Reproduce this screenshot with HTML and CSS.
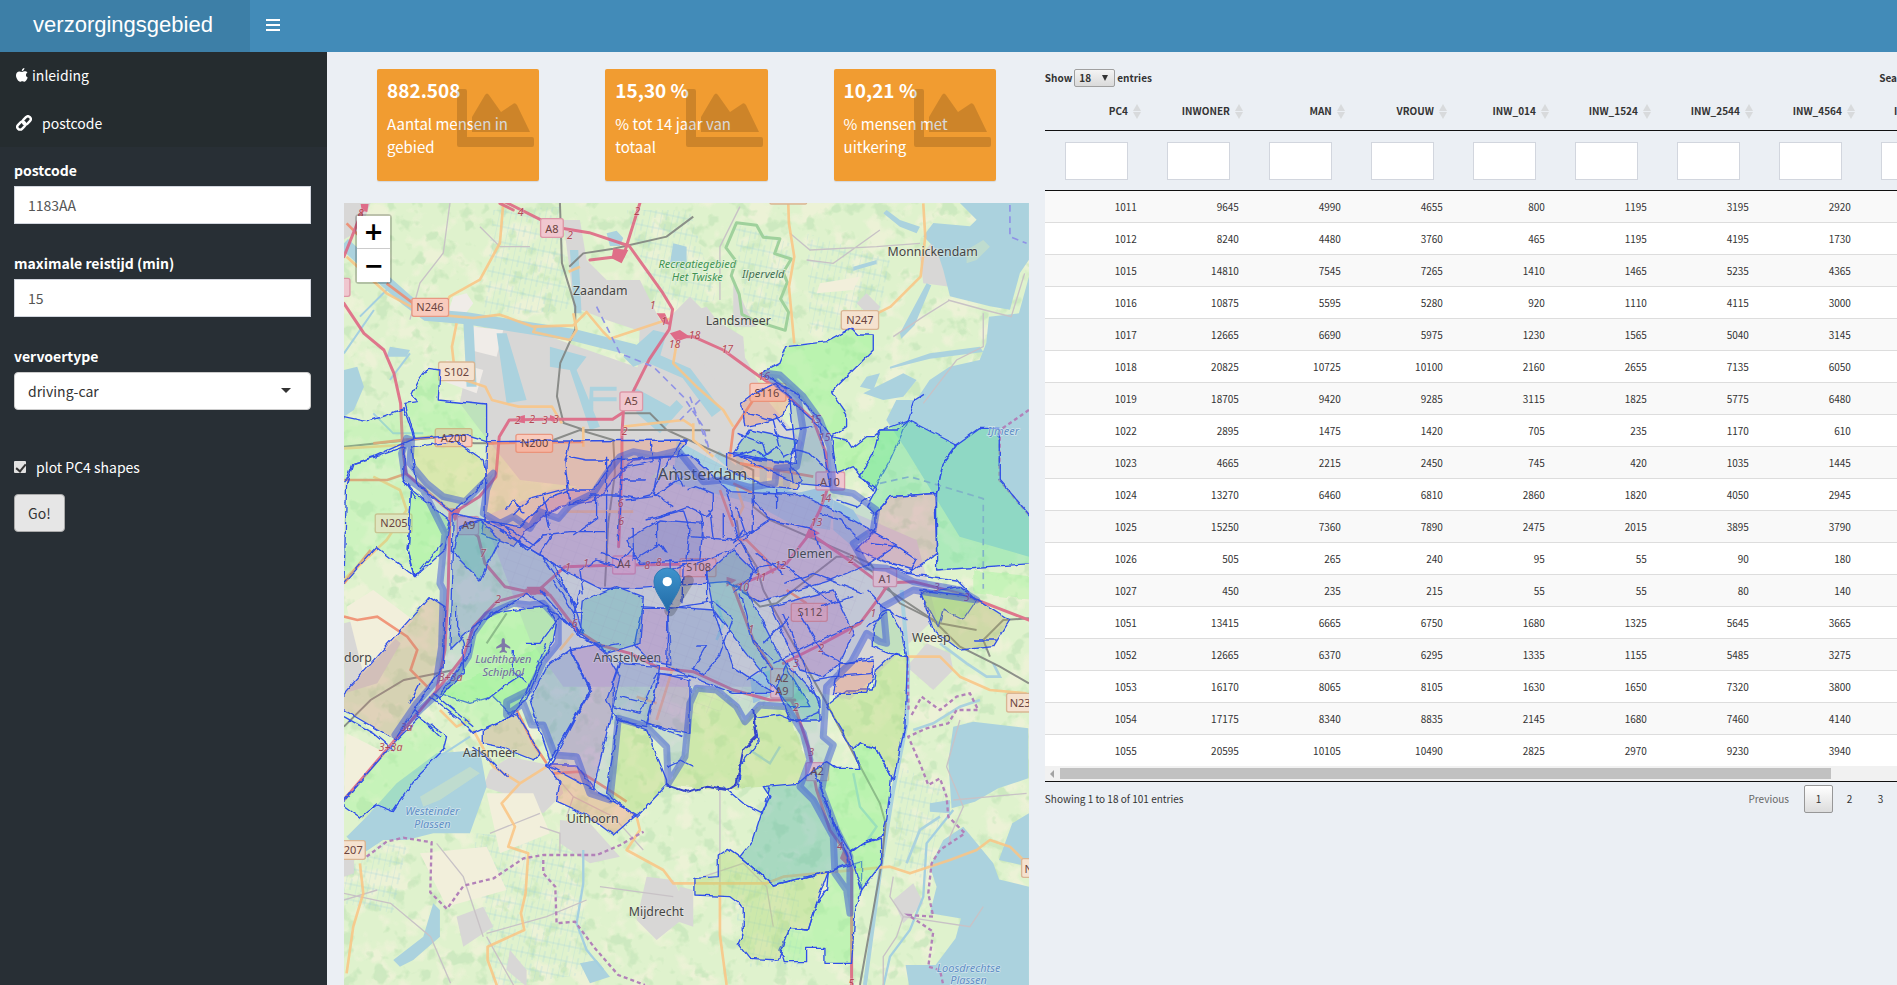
FILE: index.html
```html
<!DOCTYPE html>
<html lang="nl">
<head>
<meta charset="utf-8">
<title>verzorgingsgebied</title>
<link rel="stylesheet" href="styles.css">
</head>
<body>
<header class="topbar">
  <a class="logo" href="#">verzorgingsgebied</a>
  <button class="toggle" type="button" aria-label="Toggle navigation">
    <svg width="14" height="12" viewBox="0 0 14 12"><path d="M0 1h14M0 6h14M0 11h14" stroke="#fff" stroke-width="2"/></svg>
  </button>
</header>
<div class="shell">
  <aside class="sidebar">
    <nav class="menu">
      <a class="menu-item tight" href="#"><svg width="12" height="14" viewBox="0 0 12 14" fill="#fff"><path d="M8.400 0c.2 1.500-1 3-2.600 3.200C5.600 1.700 6.900.2 8.400 0zM11.700 9.500C11 11.500 9.800 13.700 8.500 13.700c-.8 0-1.200-.5-2.200-.5s-1.400.5-2.200.5C2.300 13.700 0 10.300 0 7.300c0-2.400 1.600-3.900 3.400-3.900 1 0 1.900.6 2.700.6.700 0 1.700-.7 2.900-.7.900 0 1.900.4 2.500 1.300-2.200 1.400-1.900 4.200.2 4.900z"/></svg><span>inleiding</span></a>
      <a class="menu-item" href="#"><svg width="16" height="16" viewBox="0 0 16 16" fill="none" stroke="#fff" stroke-width="2.400"><rect x="6.200" y="2.600" width="9" height="5.600" rx="2.800" transform="rotate(-45 10.700 5.400)"/><rect x=".8" y="7.800" width="9" height="5.600" rx="2.800" transform="rotate(-45 5.300 10.600)"/></svg><span>postcode</span></a>
    </nav>
    <form class="form">
      <div class="field"><label for="pc">postcode</label><input id="pc" type="text" value="1183AA"></div>
      <div class="field"><label for="tijd">maximale reistijd (min)</label><input id="tijd" type="text" value="15"></div>
      <div class="field"><label for="type">vervoertype</label>
        <div class="select-wrap"><select id="type"><option>driving-car</option></select></div></div>
      <label class="check"><input type="checkbox" checked><span>plot PC4 shapes</span></label>
      <button class="go" type="button">Go!</button>
    </form>
  </aside>
  <main class="content">
    <section class="left">
      <div class="boxes">
        <div class="slot"><div class="box"><strong>882.508</strong><p>Aantal mensen in gebied</p><svg class="chart" viewBox="0 0 77 58"><path d="M2 0h6q2 0 2 2v46h65q2 0 2 2v6q0 2-2 2H2q-2 0-2-2V2q0-2 2-2zM15 43V28L28 6q2-3 4 0l12 17 12-8q2-2 4 1l13 27z"/></svg></div></div>
        <div class="slot"><div class="box"><strong>15,30 %</strong><p>% tot 14 jaar van totaal</p><svg class="chart" viewBox="0 0 77 58"><path d="M2 0h6q2 0 2 2v46h65q2 0 2 2v6q0 2-2 2H2q-2 0-2-2V2q0-2 2-2zM15 43V28L28 6q2-3 4 0l12 17 12-8q2-2 4 1l13 27z"/></svg></div></div>
        <div class="slot"><div class="box"><strong>10,21 %</strong><p>% mensen met uitkering</p><svg class="chart" viewBox="0 0 77 58"><path d="M2 0h6q2 0 2 2v46h65q2 0 2 2v6q0 2-2 2H2q-2 0-2-2V2q0-2 2-2zM15 43V28L28 6q2-3 4 0l12 17 12-8q2-2 4 1l13 27z"/></svg></div></div>
      </div>
      <div class="map">
        <div class="zoom"><button type="button" aria-label="Zoom in">+</button><button type="button" aria-label="Zoom out">−</button></div>
        <svg class="map-art" viewBox="12 9 2055 2346" preserveAspectRatio="xMidYMin slice">
          <defs>
            <filter id="mottle" x="0" y="0" width="1" height="1" color-interpolation-filters="sRGB"><feTurbulence type="fractalNoise" baseFrequency=".014" numOctaves="3" seed="8"/><feColorMatrix values="0 0 0 0 .94  0 0 0 0 .95  0 0 0 0 .85  6 0 0 0 -3.100"/></filter>
            <filter id="woods" x="0" y="0" width="1" height="1" color-interpolation-filters="sRGB"><feTurbulence type="fractalNoise" baseFrequency=".02" numOctaves="3" seed="21"/><feColorMatrix values="0 0 0 0 .79  0 0 0 0 .91  0 0 0 0 .74  8 0 0 0 -4.600"/></filter>
            <filter id="rough" x="-.05" y="-.05" width="1.100" height="1.100" color-interpolation-filters="sRGB"><feTurbulence type="fractalNoise" baseFrequency=".035" numOctaves="2" seed="3"/><feDisplacementMap in="SourceGraphic" scale="14" xChannelSelector="R" yChannelSelector="G"/></filter>
            <pattern id="ditch" width="34" height="46" patternUnits="userSpaceOnUse" patternTransform="rotate(12)"><path d="M0 0V46M17 6V40M0 23H34" stroke="#9fcfdd" stroke-width="2" fill="none" opacity=".6"/></pattern>
            <pattern id="street" width="38" height="30" patternUnits="userSpaceOnUse" patternTransform="rotate(20)"><path d="M0 0H38M0 0V30" stroke="#8d86a5" stroke-width="1.500" fill="none" opacity=".3"/></pattern>
            <linearGradient id="pin" x2="0" y2="1"><stop stop-color="#3f93cd"/><stop offset="1" stop-color="#216ba6"/></linearGradient>
          </defs>
          <rect x="0" y="0" width="2100" height="3000" fill="#dff2cd"/>
          <rect x="0" y="0" width="2100" height="2400" filter="url(#mottle)" opacity=".8"/>
          <rect x="0" y="0" width="2100" height="2400" filter="url(#woods)" opacity=".8"/>
          <!-- polder ditches -->
          <g fill="url(#ditch)"><path d="M460 30L660 20 690 330 430 350zM860 30h190l80 270-180 40zM1180 70l170 60 0 250-130-40zM1400 100l250 80-40 200-200 20zM400 1900l300 20 60 400-300 40zM1680 1700l140 60-60 280-100-40zM20 1900l180 40-40 200-150-30zM1150 2000l220 20 20 280-160 0z"/></g>
          <!-- built-up areas -->
          <g fill="#d8d7d6">
            <path d="M12 9h80l-30 80-50 30zM670 60h50l20 120 60 60 100 0 60 120-40 40-120-40-100-40-10-100zM400 380l200 20 400 140 60 180-180 160-340-40-120-150-60-80zM900 380l200-60 120 160 70 130 100 120-60 110-330-40-120-60z"/>
            <path d="M990 350l60-60 60 60 100 60 10 120-80 30zM1180 240l40 90 30 50-70 0zM1740 170l50-60 30 60 10 90-80-10zM1550 310l30-30 40 40-20 40zM12 1270l80-20 90 80-70 120-98 30zM450 1710l60-40 140 30 20 80-60 60-120-60-60-20zM660 1860l90 10 90 100-90 20-90-60zM920 2030l80 10 50 100-100 80-60-60zM1700 1400l60-70 70 30 10 50-60 60zM1020 2060l40 10 0 110-60-20zM1660 2100l60-50 30 60-60 60zM350 2150l80-30 30 60-90 60zM510 2250l50 60 0 50-60-50zM12 1960l30 10 0 50-30 10z"/>
            <path d="M430 950l200-80 500-60 300 80 300 130 60 230-260 250-160-40-700 0-100-140z"/>
          </g>
          <g fill="#f0ece8"><path d="M400 380l90 10-20 80-80-20zM320 480l110 30-20 70-110-40zM340 290l40-10 20 30-30 40-50 0z"/></g>
          <g fill="#f2efdb"><path d="M20 1220l80-50 120 90-150 160zM20 1600l120 60-128 130zM440 1780l140 0 50 120-150 60zM240 1960l200-20 60 130-180 50zM1440 250l120-20-20 40-110 10z"/></g>
          <!-- water -->
          <g fill="#abd2de">
            <path d="M1860 9l50 50-20 20-110-10-30 40 40 40 20 60 20 80 120 30 60 10 30-110 27-40V9zM2067 230l-30 110-90 10-8 80-20 50-90 20-60 40-40 60-60 0-30 60 60 90 160 260 208 60z"/>
            <path d="M12 130L110 220 200 300 260 345 380 355 700 405 880 450 1040 520 1130 640" fill="none" stroke="#abd2de" stroke-width="36"/>
            <path d="M370 360h30l10 200h-30zM470 400l30 0 60 200-60 10zM630 440l110 30-30 40 70 170-30 10-60-180-60-10zM750 560h80v12h-70v20h70v12h-70v30h-14zM850 470l90-80 40 10-20 70-80 30zM880 560l110 60 20-20 20 20-70 80-70-60zM12 510l40-10 20 60-30 70-30 20zM150 440l60 10-10 20-60 0zM690 150l25 0 10 190-22 0zM800 100l30-8 20 22-10 24-30 0zM1000 130l40 10 0 70-50-20zM1010 720l180 100 180 60 80-20 30 40-10 90-120-20-110-60-240-60z"/>
            <path d="M20 1910l60-60 90-100 120-90 130-10 20 110-50 140-110 0-80 20-70 0-60 40zM160 2280l90-70 30-100 20 20 0 80-80 70-40 20zM1480 900l60 30 50 80-40 40-70-60zM720 2290l50-10 40 50-60 20zM1230 1430l60-20 20 70-70 30zM1570 580l120-60 40 20-40 50-60 10zM1560 560l20-30 40-10-20 50zM1650 500l120-40 150-20 10 16-160 20-120 30zM1680 400l80-150 14 6-50 120-40 40zM1540 200l70-20 0 12-70 20zM1640 30l40 30 60 20-10 20-50-20-50-40zM1840 1580l60-15 165 20 0 150-90 30-70 40-70 20-10-140zM1810 1920l60-40 90 110 40 110-110 60-120-20 20-80-20-60zM2067 1840l-50 30-40 110 90 20zM1900 2020l167 40v295h-360l-10-60 90 0 60-80zM1770 1810l60-10 0 40-60-5z"/>
            <path d="M1685 1170L1705 1400 1700 1570 1660 1770 1620 2020 1575 2355" fill="none" stroke="#abd2de" stroke-width="12"/>
            <path d="M1800 1330l80 60 60 40 40 0-20-40M1920 1500l-60 20-80 50-60 20M1130 1200l20 70-20 50M1700 1990l40-100 60-40" fill="none" stroke="#abd2de" stroke-width="8"/>
            <path d="M1130 760l80 70 80 60 90 30M1200 880l0-120M1270 850l0-90M1340 870l0-60" stroke="#abd2de" stroke-width="22" fill="none"/>
            <path d="M1840 1830l-80 100-10 160-40 100-60 80-20 90M730 1950l0 100-20 120 30 80 50 60M1320 1640l-30 50-60-40M1540 1720l20 100 50 60-40 60" stroke="#a4cfe0" stroke-width="7" fill="none"/>
            <path d="M250 700l-90 0-60-60M60 350l80-80M12 460l90-130M210 460l-60 80M220 1720l170-110" stroke="#a4cfe0" stroke-width="6" fill="none"/>
          </g>
          <g fill="#c7dfc9"><path d="M240 1790l150-90 30 20-120 80-50 20zM1880 150l50-30 20 20-40 40-30 10z" opacity=".7"/></g>
          <!-- nature reserve -->
          <path d="M1190 68l60 8 20 36 50 4-16 45 50 16-24 40 12 30-20 50 24 40-10 54-90-28-40-20-8-60-24-56 14-44-30-40z" fill="none" stroke="#9fd19c" stroke-width="9" stroke-linejoin="round"/>
          <!-- minor roads -->
          <g fill="none" stroke="#c8c2c6" stroke-width="4">
            <path d="M330 9l-20 150-70 90-30 110M420 80l60 60 90 0M1200 20l-60 120 0 160M1350 100l60 50 200-10 130-10M1400 180l80 10 140-100M1824 300l110 30 80 20 40-130M1830 300l-80 50-90 60M1930 340l0 100-80 40-100 130"/>
            <path d="M12 2080l140 30 120 100 60 140M290 1930l80 100 60 180M440 2210l100 180M440 2200l180-50 120-50M1860 1560l-40 140 50 120-40 90 0 20M1840 1800l220-20M1660 2030l-10 60 40 60-20 60-40 60 0 90M1930 2120l-40 60-200-30M12 2100l100-30M780 2060l220 30"/>
            <path d="M1140 1770l0 290M1090 2030l120-40 70 70 20 120M700 1790l120 60 90 100M640 1720l60 70-20 60M600 1880l60 20 0 60M450 1900l150-60"/>
          </g>
          <g class="roads">
          <!-- railways -->
          <g fill="none" stroke="#7d7f7c" stroke-width="6">
            <path d="M660 9l6 180 40 130 0 70-45 100-10 100 20 80 60 20 380 2M1060 50l-80 60-160 36-90 14-42 40M640 720l80-30 100 30 5 100-20 150-10 190M850 640l80 0 50 50 200 90 60 30 0 110 50 40 300 130 90 120 120 60 110 20"/>
            <path d="M1210 1170l50 50 50-10 180-140 40 0 90 60M1190 960l10 60 50 80 20 70M1270 1170L1320 1260 1460 1510 1620 1810 1637 1870 1625 1990 1560 2355M12 1580l80-80 100-60 150-30M12 740l100-10 200-20 90 20 60 0M500 1240l-60 90"/>
            <path d="M1630 1160l150 100 80 80 120 60 87 50M1950 1370l-20-50 60-60 77-5"/>
          </g>
          <!-- regional roads -->
          <g fill="none" stroke="#fbc584" stroke-width="8" stroke-linejoin="round">
            <path d="M20 170l120 110 110 60 150 14 80-10 100 36 120-4 40-40 50 60 20 20 180-60M490 9l-10 120-60 110-90 50-40 60M350 370l-14 70 10 90 90 30 20 40 80 20 100 0 30 50M700 340l10 50-20 30-110-24 10-20M720 200l-34 15"/>
            <path d="M1345 10l2 60 16 100-16 90 16 170M1750 10l6 100-14 120-90 90-40 20M1010 430l-10 60 70 70 80 70 30 50M850 680l180-20 30 20M730 680l0 60M12 745l180-10M1060 670l0 50 60 50M100 830l80 40 20 60-60 90-130 120"/>
            <path d="M400 1590l60 110 80 50-55 60 40 70-20 60 60 20-8 120-14 60 10 50-110 50 0 40 40 110M540 1750l80-50M890 1850l10 40-40 60 110 60 30 40 280 0 50-20 320-30 60 20 120-40 80-30 40-30 60 20 60 60M1140 2055l0 150 20 150M60 1990l10 90-30 100-20 140M1700 1370l100 0 60 60 90 40 110 10M700 1300l-40 50"/>
            <path d="M1000 1400l-50 160M1190 860l20 60-20 40M680 935l200 0M890 1490l60 20M300 1530l50 50 40-20"/>
          </g>
          <g fill="none" stroke="#f0886a" stroke-width="8">
            <path d="M12 840l130 0 60-20M100 150l-80-80M140 250l80 60M12 1250l40 10 60-10 90 60 30 40-20 60 50 50M440 730l290-4M530 1530l50 100 40 60M640 1720l80-5 80 50 60 40M1240 600l-60 90-10 80M1200 790l220 40M1190 1020l30 0 60 60 20 40M1140 870l40 110M1240 880l-60-30M1340 1170l60 40M100 730l180-20M12 1150l80-100"/>
          </g>
          <!-- motorways -->
          <g fill="none" stroke="#df6180" stroke-width="9" stroke-linejoin="round" stroke-linecap="round">
            <path d="M12 310l60 90 60 50 30 70 20 90 6 130 10 80 140 120 80-50 50-60 10-120 30-50 110-2 200 0 30-20 80-160 60-90 10-60-30-50-100-140-120-40-100-16-160-80M72 20l-60 150M520 30l-40-20M900 9l-50 160M750 180l80-10M1010 410L1060 410 1150 450 1260 530 1340 585 1420 660 1458 760 1465 860 1440 930 1405 1000"/>
            <path d="M850 640l-4 60 0 100-10 240M335 940l80 70 20 80 60 70 90 20 90-80 140-4 260-4"/>
            <path d="M330 940L325 1160 315 1350 290 1470M560 1180L470 1205 400 1280 370 1370 300 1460 165 1620 12 1800M560 1170L630 1185 710 1290 780 1335 870 1360 960 1405 1060 1415 1180 1470 1290 1500 1365 1500M1180 1160L1240 1320 1300 1410 1365 1520 1405 1640 1430 1770 1470 1890 1520 1960 1535 2010 1535 2355M1410 1000L1340 1090 1260 1130 1180 1160M1410 1000L1540 1090 1620 1150 1720 1145 1860 1180 2067 1260M1330 1390L1440 1335 1560 1270 1620 1190 1640 1160"/>
          </g>
          <g fill="#e0597b"><path d="M820 145l45 5-20 40-30-15zM950 340l25 0 15 35-20-5zM990 400l30-10 30 20-40 15zM535 650l20-5 0 25-20-3zM630 645l15 5 0 20-15-10zM325 925l40 0-20 40zM1410 980l30 20-30 15-15-5zM1160 1130l30 10-30 20zM560 1160l50 0 20 20-60 5zM1510 1950l15 15-5 30-20-20zM62 12l24 0-4 24-16-4z"/></g>
          </g>
          <!-- ferries and borders -->
          <g fill="none" stroke="#8f92e6" stroke-width="5" stroke-dasharray="20 14"><path d="M770 320l70 140 100 40 90 90 60 90 20 80M2010 15l0 95 50 20M1620 850l90-20 220 66 0 270M1050 590l50 140M1080 600l-60 60"/></g>
          <g fill="none" stroke="#b281b9" stroke-width="7" stroke-dasharray="12 9"><path d="M2067 630L1980 690 1978 840 2067 945M1702 1370L1706 1530M80 1970l60-45 50-12 85 14-4 150 50 50 50-70 90-22 90-60 60-10 60 0 100 0 70-30 70-40M610 1980l0 40 36 40 4 110 55-5 60 80 70 80 80 30"/><path d="M1715 1545L1745 1490 1800 1530 1850 1490 1890 1480 1915 1530 1850 1530 1825 1570 1760 1585 1705 1610 1740 1690 1765 1755 1800 1735 1820 1790 1825 1850 1875 1900 1800 1950 1775 1990 1765 2080 1780 2150 1705 2145 1780 2195 1765 2300 1800 2310 1810 2355"/></g>
          <!-- road shields -->
          <g stroke-width="4">
            <g fill="#f0c7cf" stroke="#dd98a8"><rect x="602" y="56" width="68" height="56" rx="6"/><rect x="840" y="576" width="68" height="56" rx="6"/><rect x="0" y="235" width="30" height="54" rx="6"/><rect x="352" y="950" width="64" height="54" rx="6"/><rect x="818" y="1068" width="68" height="54" rx="6"/><rect x="1428" y="816" width="86" height="54" rx="6"/><rect x="1600" y="1106" width="70" height="54" rx="6"/><rect x="1292" y="1406" width="68" height="88" rx="6"/><rect x="1398" y="1688" width="68" height="54" rx="6"/></g>
            <g fill="#f9cbbd" stroke="#e89882"><rect x="216" y="295" width="110" height="54" rx="6"/><rect x="528" y="703" width="110" height="54" rx="6"/><rect x="286" y="686" width="110" height="54" rx="6"/><rect x="1230" y="550" width="108" height="54" rx="6"/><rect x="1020" y="1076" width="108" height="54" rx="6"/><rect x="1354" y="1210" width="108" height="54" rx="6"/></g>
            <g fill="#f5e2cf" stroke="#d9b694"><rect x="296" y="486" width="108" height="56" rx="6"/><rect x="1504" y="332" width="112" height="56" rx="6"/><rect x="106" y="942" width="110" height="56" rx="6"/><rect x="2000" y="1480" width="110" height="56" rx="6"/><rect x="2045" y="1976" width="60" height="56" rx="6"/><rect x="-30" y="1922" width="106" height="56" rx="6"/><rect x="1290" y="0" width="110" height="12" rx="4"/></g>
          </g>
          <!-- postcode areas -->
          <g filter="url(#rough)" stroke="#2f4fe8" stroke-width="4" stroke-linejoin="round">
            <g fill="#8ff58c" fill-opacity=".45">
              <path d="M12 650l70 15 60-20 50-20 30 90-120 55-66 22-18 46-50 60z" fill-opacity=".25"/>
              <path d="M300 510l-35-5-30 40-20 40 20 20-40 5 30 105 150-10 65 20 0-90 0-20-145-15z" fill-opacity=".35"/>
              <path d="M20 850L40 790 110 770 195 740 190 840 215 870 205 1050 225 1130 110 1040 12 1150z" fill-opacity=".22"/>
              <path d="M215 740L230 850 335 935 400 880 440 830 430 780 350 725z" fill="#d2dc8a"/>
              <path d="M215 870L330 960 315 1050 225 1130 205 1050z"/>
              <path d="M1260 520L1320 490 1340 440 1460 425 1535 385 1555 405 1600 405 1600 450 1475 575 1520 640 1520 680 1475 710 1430 650 1370 580z"/>
              <path d="M1475 710L1520 720 1535 745 1580 710 1600 710 1625 690 1705 660 1650 780 1600 870 1540 800 1490 820z"/>
              <path d="M390 1360L400 1300 450 1240 570 1225 620 1220 650 1270 640 1320 600 1400 560 1500 510 1540 460 1490 390 1510 300 1480z"/>
              <path d="M12 1820L60 1855 110 1815 160 1835 190 1790 240 1720 310 1650 320 1610 240 1550 170 1620 12 1800z" fill-opacity=".3"/>
              <path d="M270 1490L360 1560 400 1600 510 1550 560 1480 620 1330" fill-opacity=".3"/>
              <path d="M1420 1710L1460 1685 1490 1705 1560 1705 1540 1650 1560 1630 1610 1645 1655 1730 1640 1860 1625 1910 1570 1930 1530 1955 1490 1890 1445 1770z"/>
              <path d="M1465 2015L1565 1985 1565 2070 1545 2140 1535 2290 1455 2290 1455 2245 1400 2245 1400 2285 1330 2285 1320 2250 1350 2185 1405 2190 1430 2110 1460 2070z" fill-opacity=".38"/>
              <path d="M1565 2070L1625 1990 1625 1915 1570 1930 1530 1960z"/>
              <path d="M1740 1180L1860 1160 1910 1200 1870 1260 1810 1230 1795 1280z"/>
              <path d="M1600 1290L1620 1240 1650 1230 1680 1280 1700 1370 1650 1360 1600 1340z" fill-opacity=".3"/>
            </g>
            <g fill="#abd66e" fill-opacity=".35">
              <path d="M1460 1515L1520 1470 1600 1470 1610 1410 1660 1365 1703 1370 1695 1580 1660 1740 1610 1645 1560 1630 1540 1650z"/>
              <path d="M1070 1465L1130 1470 1190 1520 1215 1565 1260 1515 1340 1520 1400 1680 1375 1750 1270 1760 1140 1770 1060 1765 980 1755 1040 1660 1040 1510z" stroke="none"/>
              <path d="M835 1555L920 1590 980 1740 980 1755 910 1830 890 1850 800 1780z"/>
              <path d="M1200 1970L1165 1945 1135 1965 1135 2030 1065 2035 1065 2085 1170 2090 1210 2120 1210 2200 1195 2230 1230 2275 1315 2280 1350 2185 1405 2190 1430 2110 1465 2015 1300 2055z"/>
              <path d="M1740 1170L1900 1190 2010 1260 1960 1340 1860 1350 1780 1290z" fill="#b0ac60"/>
            </g>
            <g fill="#6adfa0" fill-opacity=".42">
              <path d="M1620 690L1670 690 1705 660 1850 735 1810 790 1790 880 1650 890 1605 945 1580 920 1610 865 1560 830 1600 760z"/>
              <path d="M1850 735L1920 685 1978 685 1978 838 2090 970 2090 1090 1790 1110 1790 880 1810 790z"/>
            </g>
            <path d="M1900 1110L2080 1130 2080 1200 1900 1180z" fill="#8ff58c" fill-opacity=".3" stroke="none"/>
            <path d="M1270 1760L1375 1750 1420 1710 1445 1770 1490 1890 1530 1990 1465 2015 1300 2055 1200 1970 1240 1920 1265 1840 1290 1790z" fill="#3da9a8" fill-opacity=".34"/>
            <g fill="#ee8a6c" fill-opacity=".35">
              <path d="M440 725l600-5-30 50-130 10-60 60-50 60-110 20-90 60-50 60-95-40 10-60z"/><path d="M1205 610l40-30 60-30 50 40-30 60-60 20-50 10z"/><path d="M1160 760l100 20 90 10 40 50-20 30-90-10-120-50z"/><path d="M620 1695l90 0 60 80 120 70-70 60-80-60-90-40 10-60z"/><path d="M1500 1390l100-10 0 50-20 50-100 0z"/>
            </g>
            <g fill="#c28878" fill-opacity=".3"><path d="M12 1480L270 1190 315 1220 310 1400 240 1500 165 1620 12 1530z"/><path d="M1550 1050L1605 990 1605 945 1650 890 1785 880 1790 1060 1720 1110 1620 1080z" fill="#c06c98"/><path d="M430 1590L530 1540 600 1660 580 1680 480 1640 430 1630z"/></g>
            <!-- core city areas -->
            <g fill="#b45fb8" fill-opacity=".3">
              <path d="M430 960l110 20 90-90 60-20 70 0 60-90 230-15 120 110 220 10 140 70 140 80-90 60-120 50-200 60-100-60-260 20-120 0-100-50z"/>
              <path d="M1290 1220l190-50 60 130-40 90-50 40-70-20z"/><path d="M905 1225l78 0 10 170-60-10-50-50z"/><path d="M690 1350l90-20 60 100-80 340-130-70 120-230z"/><path d="M960 1420l90 20 0 160-130-30z"/>
            </g>
            <g fill="#5f7fc0" fill-opacity=".26">
              <path d="M340 940L430 960 640 1090 700 1210 730 1300 560 1180 400 1280 330 1350z"/><path d="M985 1220L1120 1230 1180 1400 1300 1480 1180 1480 980 1400z"/><path d="M620 1400L690 1350 755 1470 630 1680 570 1500z"/><path d="M840 1390L960 1400 940 1500 920 1580 830 1560 800 1500z"/><path d="M1350 600L1440 680 1470 860 1370 850 1200 770 1370 790z"/><path d="M860 1020L960 960 1090 970 1080 1080 900 1090z"/>
            </g>
            <g fill="#24b6a0" fill-opacity=".26">
              <path d="M730 1200l100-40 80 30-10 140-100 30-80-60z"/><path d="M1100 1120l80-70 60 60-20 60 90 180 100 170-60 0-130-160-100-130z"/><path d="M340 1060l80 80 60-120-60-60-60 20z"/><path d="M1230 690L1370 720 1350 790 1180 760z"/><path d="M1340 1390L1440 1500 1440 1560 1350 1560 1310 1460z"/>
            </g>
            <g fill="none">
              <path d="M190 840l40 60M225 1130l80-100M500 930l20-30 30 40M430 960l50 10 80 80 40-30M690 725l-15 60 15 130 80-30 0 70-70 50M690 770l50 10 70 0M520 945l50-50 110-30M480 975l40 20 60 40 30-30 80-10 110 0M610 890l20 100M930 725l10 60-100 20M1020 725l-90 160-40 10-60-10-80 0M845 770l-10 250M800 770l0 300M840 840l80 0M880 980l0 100 80-50 20 30M920 960l110-30 20 60-10 100-70 30M950 960l0 80M640 1000l-40 60 110 160"/>
              <path d="M1040 870l30-10 50 20 0 50-20 20-60-30M1050 1010l130 10 60-30 0-120M1110 930l10 90M1080 930l10 80M1150 940l0 70M1160 870l30 130 60 120M1190 920l30 90M1240 900l50 60 130 30 20 60M1290 960l-60 40-20 20M1070 1090l100-40 30-20M1310 930l0-60M1180 1180l80-80 70-10 70 60 80 60M1330 1150l90-30 150 60M1250 1060l80 60M1210 990l-30 40M1000 800l30 60M960 770l-20 110 60 40M860 900l80-10 90-60M1040 920l-80 30"/>
              <path d="M730 1180l-10-70 50-30 60 20 50-60M600 1170l120 140M640 1140l60 100 30 0M780 1060l60 20M900 1220l90 5 130-20 60 50-40 110-50 60-30-20 40-70-30 0M990 1080l5 130M1030 1090l-4 120M1100 1110l0 100M1200 1180l40 150 60 80M1270 1330l80-80M1300 1390l120-60 150-70M1380 1240l70 120M1440 1220l100-30M1450 1360l60 30 90-20M1330 1240l110 280M1240 1320l60 60M1420 1440l60-10 120-10"/>
              <path d="M690 1340l60 130-130 230M840 1380l-20 60 0 80 80 20 50-120 110 10M840 1490l80 20M900 1560l130 50M350 1220l0 60 20 50 0 90-80 80M520 1350l0 60 40 40M280 1480l120 100M220 1530l80 80M240 1450l-30 60M550 1420l-60 40-50 40M400 1640l40 30 60 60M980 1700l40-20 40 20M720 1170l-20 80 20 60 60 30 60-10M560 1330l40 0 60-80M12 1550l90 50 60 50"/>
              <path d="M1490 900l60 20 40-30M1440 940l60 20 60 60M1220 640l80 20 20 80M1300 640l40 50 80-10M1190 700l80 30 10 30M1180 770l60-20 30 20 40-30 20 30 40-20 40 10 60 60M1350 780l10 70M1220 1440l60-40"/>
              <path d="M1590 1030l80 10 60 40-20 40-60-20M1700 1120l150 20 60 60M1580 1170l60 60 60 30M1580 1280l60-40M1900 1320l70 0M1705 660l20-60 30-20"/>
              <path d="M1240 1555l80-10 50 20 70-30M1245 1550l10 80-50 60-10 70M1290 1760l-20 80-60-30-60-50"/>
            </g>
          </g>
          <path d="M980 1755l60 20 60-15 60 10 30-20 20-100 40-40-10-80" fill="none" stroke="#3445c8" stroke-width="6" filter="url(#rough)"/>
          <path d="M1130 750l-250 0-70 80-120 100-200 40 0 250 240 40 160 300 380-40 200-150 120-250-120-200z" fill="url(#street)"/>
          <!-- labels -->
          <g class="shield">
            <text x="636" y="98">A8</text><text x="874" y="616">A5</text><text x="270" y="334">N246</text><text x="584" y="742">N200</text><text x="341" y="725">A200</text><text x="350" y="528">S102</text><text x="1560" y="371">N247</text><text x="162" y="981">N205</text><text x="386" y="988">A9</text><text x="852" y="1105">A4</text><text x="1281" y="590">S116</text><text x="1076" y="1114">S108</text><text x="1470" y="857">A10</text><text x="1636" y="1148">A1</text><text x="1410" y="1249">S112</text><text x="1326" y="1446">A2</text><text x="1326" y="1485">A9</text><text x="1432" y="1726">A2</text><text x="40" y="1961">207</text><text x="2050" y="1520">N236</text><text x="2066" y="2018">N</text>
          </g>
          <g class="exit">
            <text x="542" y="48">4</text><text x="690" y="116">2</text><text x="892" y="44">2</text><text x="938" y="326">1</text><text x="972" y="374">1</text><text x="1004" y="443">18</text><text x="1064" y="418">18</text><text x="1162" y="458">17</text><text x="1272" y="540">16</text><text x="1426" y="670">15</text><text x="1454" y="724">15</text><text x="1456" y="905">14</text><text x="1430" y="978">13</text><text x="1322" y="1108">12</text><text x="1262" y="1142">11</text><text x="1210" y="1174">10</text><text x="533" y="671">2</text><text x="577" y="668">2</text><text x="615" y="671">3</text><text x="648" y="668">3</text><text x="854" y="705">2</text><text x="842" y="920">6</text><text x="844" y="975">6</text><text x="430" y="1070">7</text><text x="738" y="1100">1</text><text x="684" y="1114">1</text><text x="922" y="1108">8</text><text x="956" y="1098">8</text><text x="1534" y="1090">2</text><text x="1790" y="1172">3</text><text x="1600" y="1250">1</text><text x="1532" y="1303">7</text><text x="1444" y="1356">2</text><text x="1368" y="1400">3</text><text x="1234" y="1300">1</text><text x="1368" y="1532">2</text><text x="1414" y="1668">3</text><text x="1880" y="1204">3</text><text x="474" y="1210">2</text><text x="384" y="1340">2</text><text x="704" y="1280">6</text><text x="332" y="1444">3+3a</text><text x="200" y="1592">3a</text><text x="152" y="1652">3+3a</text><text x="62" y="50">8</text><text x="1500" y="1950">4</text><text x="1534" y="2360">5</text>
          </g>
          <g class="place">
            <text x="781" y="284">Zaandam</text><text x="1778" y="168">Monnickendam</text><text x="1195" y="376">Landsmeer</text><text class="city" x="1088" y="839">Amsterdam</text><text x="1410" y="1074">Diemen</text><text x="862" y="1385">Amstelveen</text><text x="1774" y="1325">Weesp</text><text x="450" y="1671">Aalsmeer</text><text x="758" y="1868">Uithoorn</text><text x="949" y="2147">Mijdrecht</text><text x="54" y="1385">dorp</text>
          </g>
          <g class="nature"><text x="1072" y="203">Recreatiegebied</text><text x="1072" y="242">Het Twiske</text><text class="dark" x="1270" y="233">Ilperveld</text></g>
          <g class="lake"><text x="277" y="1846">Westeinder</text><text x="277" y="1885">Plassen</text><text x="1990" y="704">IJmeer</text><text x="1886" y="2315">Loosdrechtse</text><text x="1886" y="2352">Plassen</text><text class="air" x="490" y="1388">Luchthaven</text><text class="air" x="490" y="1427">Schiphol</text></g>
          <path d="M490 1314c6 0 5 12 5 16l16 11v5l-16-5v9l6 5v4l-11-3-11 3v-4l6-5v-9l-16 5v-5l16-11c0-4-1-16 5-16z" fill="#7f79a8"/>
          <!-- 15 minute reach -->
          <path d="M215 720L210 790 260 850 310 890 375 905 460 820 440 870 430 940 480 970 520 950 570 985 600 935 655 955 690 915 760 880 800 820 840 770 880 755 950 768 1015 752 1090 845 1150 840 1230 862 1305 850 1310 805 1370 800 1390 690 1375 600 1320 560 1278 520 1320 525 1390 590 1440 660 1470 740 1480 870 1540 880 1610 930 1600 990 1540 1030 1580 1100 1640 1105 1720 1145 1860 1170 1910 1200 1780 1180 1720 1170 1630 1220 1640 1330 1620 1325 1580 1300 1535 1385 1460 1460 1450 1610 1480 1635 1460 1690 1445 1770 1490 1890 1530 1970 1530 2140 1520 2070 1485 2020 1480 1910 1420 1800 1380 1760 1410 1680 1390 1600 1340 1520 1260 1515 1215 1565 1190 1520 1130 1470 1070 1465 1050 1510 1035 1670 985 1750 980 1640 920 1580 835 1555 825 1660 810 1800 750 1780 710 1670 645 1665 610 1575 575 1575 550 1510 500 1545 500 1505 570 1470 610 1385 655 1330 655 1260 610 1210 570 1215 520 1210 440 1245 400 1300 385 1370 340 1440 240 1530 165 1605 230 1510 290 1440 305 1340 310 1170 300 1150 315 1000 250 870 195 830 185 760 200 715z" fill="#4a6ad8" fill-opacity=".15" stroke="#3250d8" stroke-opacity=".48" stroke-width="21" stroke-linejoin="round"/>
          <g><path d="M990 1232l55-90" stroke="#000" stroke-opacity=".2" stroke-width="34" stroke-linecap="round"/><path d="M982 1234c-10-30-40-58-40-90a40 40 0 0 1 80 0c0 32-30 60-40 90z" fill="url(#pin)" stroke="#2f7ab5" stroke-width="3"/><circle cx="982" cy="1145" r="14" fill="#fff"/></g>
        </svg>
      </div>
    </section>
    <section class="right">
      <div class="tools">
        <label class="length">Show <select><option>18</option></select> entries</label>
        <label class="search">Search: <input type="search"></label>
      </div>
      <div class="scroller">
        <table>
          <thead>
            <tr class="names"><th>PC4</th><th>INWONER</th><th>MAN</th><th>VROUW</th><th>INW_014</th><th>INW_1524</th><th>INW_2544</th><th>INW_4564</th><th>INW_65PL</th><th></th></tr>
            <tr class="filters"><td><input type="text" aria-label="PC4"></td><td><input type="text" aria-label="INWONER"></td><td><input type="text" aria-label="MAN"></td><td><input type="text" aria-label="VROUW"></td><td><input type="text" aria-label="INW_014"></td><td><input type="text" aria-label="INW_1524"></td><td><input type="text" aria-label="INW_2544"></td><td><input type="text" aria-label="INW_4564"></td><td><input type="text" aria-label="INW_65PL"></td><td></td></tr>
          </thead>
          <tbody>
            <tr><td>1011</td><td>9645</td><td>4990</td><td>4655</td><td>800</td><td>1195</td><td>3195</td><td>2920</td><td></td><td></td></tr>
            <tr><td>1012</td><td>8240</td><td>4480</td><td>3760</td><td>465</td><td>1195</td><td>4195</td><td>1730</td><td></td><td></td></tr>
            <tr><td>1015</td><td>14810</td><td>7545</td><td>7265</td><td>1410</td><td>1465</td><td>5235</td><td>4365</td><td></td><td></td></tr>
            <tr><td>1016</td><td>10875</td><td>5595</td><td>5280</td><td>920</td><td>1110</td><td>4115</td><td>3000</td><td></td><td></td></tr>
            <tr><td>1017</td><td>12665</td><td>6690</td><td>5975</td><td>1230</td><td>1565</td><td>5040</td><td>3145</td><td></td><td></td></tr>
            <tr><td>1018</td><td>20825</td><td>10725</td><td>10100</td><td>2160</td><td>2655</td><td>7135</td><td>6050</td><td></td><td></td></tr>
            <tr><td>1019</td><td>18705</td><td>9420</td><td>9285</td><td>3115</td><td>1825</td><td>5775</td><td>6480</td><td></td><td></td></tr>
            <tr><td>1022</td><td>2895</td><td>1475</td><td>1420</td><td>705</td><td>235</td><td>1170</td><td>610</td><td></td><td></td></tr>
            <tr><td>1023</td><td>4665</td><td>2215</td><td>2450</td><td>745</td><td>420</td><td>1035</td><td>1445</td><td></td><td></td></tr>
            <tr><td>1024</td><td>13270</td><td>6460</td><td>6810</td><td>2860</td><td>1820</td><td>4050</td><td>2945</td><td></td><td></td></tr>
            <tr><td>1025</td><td>15250</td><td>7360</td><td>7890</td><td>2475</td><td>2015</td><td>3895</td><td>3790</td><td></td><td></td></tr>
            <tr><td>1026</td><td>505</td><td>265</td><td>240</td><td>95</td><td>55</td><td>90</td><td>180</td><td></td><td></td></tr>
            <tr><td>1027</td><td>450</td><td>235</td><td>215</td><td>55</td><td>55</td><td>80</td><td>140</td><td></td><td></td></tr>
            <tr><td>1051</td><td>13415</td><td>6665</td><td>6750</td><td>1680</td><td>1325</td><td>5645</td><td>3665</td><td></td><td></td></tr>
            <tr><td>1052</td><td>12665</td><td>6370</td><td>6295</td><td>1335</td><td>1155</td><td>5485</td><td>3275</td><td></td><td></td></tr>
            <tr><td>1053</td><td>16170</td><td>8065</td><td>8105</td><td>1630</td><td>1650</td><td>7320</td><td>3800</td><td></td><td></td></tr>
            <tr><td>1054</td><td>17175</td><td>8340</td><td>8835</td><td>2145</td><td>1680</td><td>7460</td><td>4140</td><td></td><td></td></tr>
            <tr><td>1055</td><td>20595</td><td>10105</td><td>10490</td><td>2825</td><td>2970</td><td>9230</td><td>3940</td><td></td><td></td></tr>
          </tbody>
        </table>
        <div class="hbar"><span class="arrow"></span><span class="thumb"></span></div>
      </div>
      <div class="foot">
        <div>Showing 1 to 18 of 101 entries</div>
        <nav class="pages"><a class="prev" href="#">Previous</a><a class="page on" href="#">1</a><a class="page" href="#">2</a><a class="page" href="#">3</a><a class="page" href="#">4</a><a class="page" href="#">5</a><a class="page" href="#">6</a><a class="prev" href="#">Next</a></nav>
      </div>
    </section>
  </main>
</div>
</body>
</html>
```
FILE: styles.css
```css
* { box-sizing: border-box; }
html, body { height: 100%; }
body {
  margin: 0;
  display: flex;
  flex-direction: column;
  overflow: hidden;
  background: #ebeff4;
  color: #333;
  font-family: "Noto Sans CJK SC", "Noto Sans", sans-serif;
  font-size: 14px;
  line-height: 20px;
}
input, select, button { font: inherit; color: inherit; }
a { color: inherit; text-decoration: none; }

.topbar { display: flex; flex: none; height: 52px; background: #428bb8; }
.logo {
  width: 250px;
  padding-right: 4px;
  background: #3d7fa7;
  color: #fff;
  font: 22px/50px "Liberation Sans", Arial, sans-serif;
  text-align: center;
}
.toggle { display: flex; align-items: center; padding: 0 16px 2px; border: 0; background: none; }

.shell { display: flex; flex: 1; min-height: 0; }
.sidebar { flex: none; width: 327px; background: #282f35; color: #fff; }
.menu { background: #252c2f; }
.menu-item { display: flex; align-items: center; gap: 10px; height: 49px; padding: 0 16px; }
.menu-item.tight { gap: 4px; height: 46px; }
.form { padding: 13px 16px 0 14px; }
.field { height: 93px; }
.field label { display: block; margin-bottom: 6px; font-weight: 700; }
.field input, .field select {
  display: block;
  width: 100%;
  height: 38px;
  padding: 0 13px;
  border: 1px solid #d2d6de;
  background: #fff;
  color: #555;
}
.select-wrap { position: relative; }
.select-wrap::after {
  content: "";
  position: absolute;
  right: 20px;
  top: 16px;
  border: 5px solid transparent;
  border-top-color: #333;
  border-bottom: 0;
}
.field select { appearance: none; border-color: #ccc; border-radius: 4px; color: #333; }
.check { display: flex; align-items: center; gap: 10px; height: 20px; margin-top: 18px; }
.check input {
  appearance: none;
  width: 12px;
  height: 12px;
  margin: 0;
  border-radius: 1px;
  background: #e2e2e2;
  position: relative;
}
.check input::after {
  content: "";
  position: absolute;
  left: 4px;
  top: 1px;
  width: 4px;
  height: 8px;
  border: solid #333;
  border-width: 0 2px 2px 0;
  transform: rotate(40deg);
}
.go {
  height: 38px;
  margin-top: 17px;
  padding: 0 13px;
  border: 1px solid #aaa;
  border-radius: 4px;
  background: #e6e6e6;
  color: #333;
}

.content {
  flex: 1;
  min-width: 0;
  display: grid;
  grid-template-columns: 44.1% 66.6%;
  gap: 16px;
  padding: 17px 0 0 17px;
  overflow: hidden;
}
.left { display: flex; flex-direction: column; min-width: 0; }
.boxes { display: grid; grid-template-columns: repeat(3, 1fr); margin-bottom: 22px; }
.slot { padding: 0 33px; }
.box {
  position: relative;
  height: 112px;
  padding: 7px 10px;
  border-radius: 2px;
  background: #f19c31;
  box-shadow: 0 1px 1px rgba(0, 0, 0, .1);
  color: #fff;
}
.box strong { display: block; font-size: 19px; line-height: 28px; }
.box p { width: 130px; margin: 8px 0 0; font-size: 15px; line-height: 23px; }
.chart { position: absolute; top: 20px; right: 5px; width: 77px; height: 58px; fill: rgba(0, 0, 0, .15); }

.map { position: relative; flex: 1; min-height: 0; overflow: hidden; }
.map-art { display: block; width: 100%; height: 100%; }
.roads { opacity: .85; }
.zoom {
  position: absolute;
  left: 11px;
  top: 11px;
  border: 2px solid rgba(0, 0, 0, .2);
  border-radius: 4px;
  background-clip: padding-box;
}
.zoom button {
  display: block;
  width: 33px;
  height: 33px;
  padding: 0;
  border: 0;
  background: #fff;
  color: #000;
  font: 700 24px/30px "DejaVu Sans", sans-serif;
}
.zoom button:first-child { border-bottom: 1px solid #ccc; }
.map-art text { font-family: "Noto Sans", sans-serif; text-anchor: middle; }
.shield { font-size: 33px; fill: #6b4440; }
.exit { font-size: 32px; font-style: italic; fill: #a8313f; fill-opacity: .85; stroke: #f3d6d6; stroke-width: 4px; stroke-opacity: .4; paint-order: stroke; }
.place { font-size: 37px; fill: #444; stroke: #f2f2ea; stroke-width: 5px; stroke-opacity: .4; paint-order: stroke; }
.place .city { font-size: 49px; }
.nature { font-size: 33px; font-style: italic; fill: #3f9352; stroke: #e5f3dc; stroke-width: 4px; paint-order: stroke; }
.nature .dark { fill: #406e50; }
.lake { font-size: 33px; font-style: italic; fill: #5f8fc6; stroke: #e3eef4; stroke-width: 4px; stroke-opacity: .7; paint-order: stroke; }
.lake .air { fill: #6f6998; stroke-opacity: .3; }

.right { font-size: 10px; min-width: 0; }
.tools { display: flex; justify-content: space-between; height: 18px; align-items: center; font-weight: 700; }
.tools label { display: flex; align-items: center; gap: 2px; }
.length select {
  appearance: none;
  width: 41px;
  height: 18px;
  padding: 0 4px;
  border: 1px solid #a0a0a0;
  border-radius: 2px;
  background: linear-gradient(#f4f4f4, #dadada);
  line-height: 14px;
}
.length { position: relative; }
.length::after {
  content: "";
  position: absolute;
  left: 57px;
  top: 7px;
  border: 3px solid transparent;
  border-top: 6px solid #333;
  border-bottom: 0;
}
.search input { width: 161px; height: 18px; border: 1px solid #aaa; }
.scroller { overflow: hidden; border-bottom: 1px solid #111; }
table { border-collapse: separate; border-spacing: 0; table-layout: fixed; width: 1020px; }
.names th {
  position: relative;
  width: 102px;
  height: 44px;
  padding: 4px 19px 0 0;
  border-bottom: 1px solid #111;
  text-align: right;
}
.names th::before, .names th::after {
  content: "";
  position: absolute;
  right: 6px;
  border: 4px solid transparent;
}
.names th::before { top: 17px; border-bottom: 7px solid #d8dadc; border-top: 0; }
.names th::after { top: 25px; border-top: 7px solid #d8dadc; border-bottom: 0; }
.filters td { height: 60px; padding: 0 19px 0 20px; border-bottom: 1px solid #111; }
.filters input { display: block; width: 100%; height: 38px; border: 1px solid #d2d6de; background: #fff; }
tbody td {
  height: 32px;
  padding: 0 10px 0 0;
  border-bottom: 1px solid #ddd;
  background: #fff;
  text-align: right;
}
tbody tr:nth-child(odd) td { background: #f9f9f9; }
tbody tr:last-child td { height: 31px; border: 0; }
.hbar { display: flex; align-items: center; height: 15px; padding: 0 15px 0 5px; background: #f1f1f1; }
.arrow { border: 4px solid transparent; border-right: 4px solid #a3a3a3; border-left: 0; margin-right: 6px; }
.thumb { width: 76%; height: 11px; background: #c1c1c1; }
.foot { display: flex; justify-content: space-between; padding-top: 3px; line-height: 28px; }
.pages { display: flex; gap: 2px; padding-right: 42px; }
.prev { padding: 0 13px; color: #666; }
.page { width: 29px; height: 28px; text-align: center; }
.page.on { border: 1px solid #979797; border-radius: 2px; background: linear-gradient(#fff, #dcdcdc); line-height: 26px; }
```
